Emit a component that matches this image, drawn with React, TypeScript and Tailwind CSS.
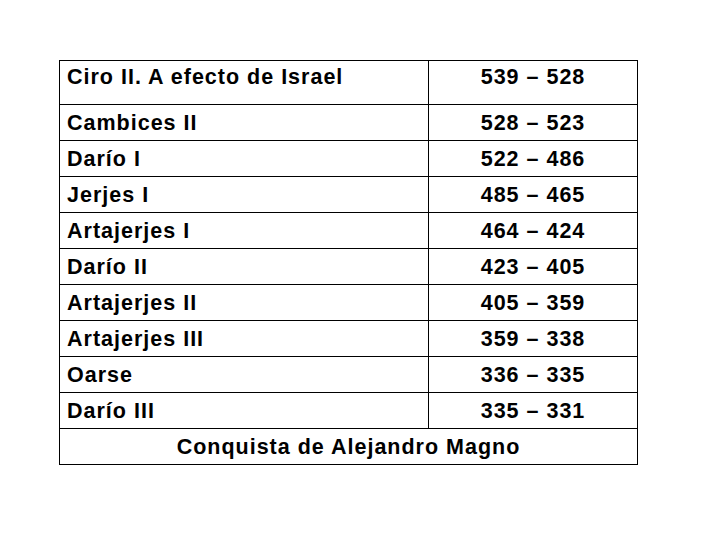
const rows: [string, string][] = [
  ["Cambices II", "528 – 523"],
  ["Darío I", "522 – 486"],
  ["Jerjes I", "485 – 465"],
  ["Artajerjes I", "464 – 424"],
  ["Darío II", "423 – 405"],
  ["Artajerjes II", "405 – 359"],
  ["Artajerjes III", "359 – 338"],
  ["Oarse", "336 – 335"],
  ["Darío III", "335 – 331"],
]

export default function App() {
  return (
    <div
      className="w-[720px] h-[540px] bg-white pt-[60px] pl-[59px] text-black"
      style={{ fontFamily: '"Liberation Sans", Arial, sans-serif' }}
    >
      <table className="border-collapse w-[578px] table-fixed text-[21.5px] font-bold tracking-[1px]">
        <colgroup>
          <col className="w-[369px]" />
          <col className="w-[209px]" />
        </colgroup>
        <tbody>
          <tr className="h-[44px]">
            <td className="border border-black align-top pl-[7px] pt-[4px] leading-[24px]">Ciro II. A efecto de Israel</td>
            <td className="border border-black align-top text-center pt-[4px] leading-[24px]">539 – 528</td>
          </tr>
          {rows.map(([name, years]) => (
            <tr key={name} className="h-[36px]">
              <td className="border border-black pl-[7px] leading-[24px] p-0">{name}</td>
              <td className="border border-black text-center leading-[24px] p-0">{years}</td>
            </tr>
          ))}
          <tr className="h-[36px]">
            <td colSpan={2} className="border border-black text-center leading-[24px] p-0">
              Conquista de Alejandro Magno
            </td>
          </tr>
        </tbody>
      </table>
    </div>
  )
}
